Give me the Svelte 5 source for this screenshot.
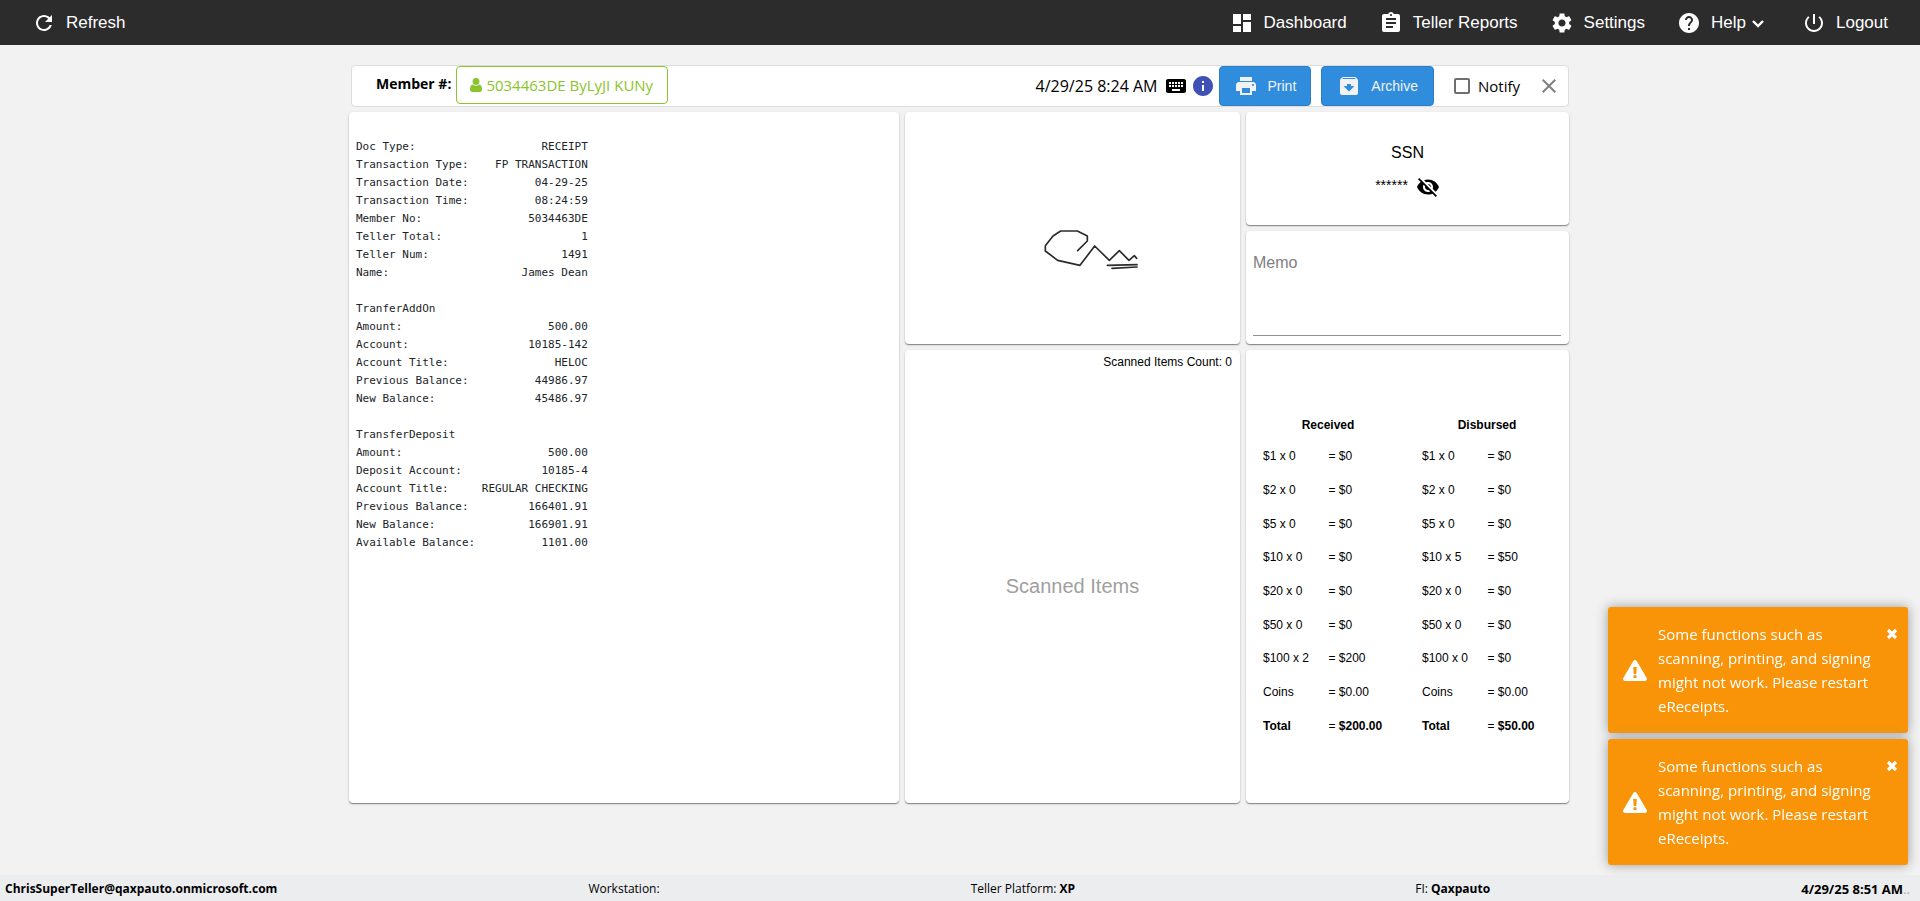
<script>
  const icons = {
    refresh: 'M17.65 6.35C16.2 4.9 14.21 4 12 4c-4.42 0-7.99 3.58-7.99 8s3.57 8 7.99 8c3.73 0 6.84-2.55 7.73-6h-2.08c-.82 2.33-3.04 4-5.65 4-3.31 0-6-2.69-6-6s2.69-6 6-6c1.66 0 3.14.69 4.22 1.78L13 11h7V4l-2.35 2.35z',
    dashboard: 'M3 13h8V3H3v10zm0 8h8v-6H3v6zm10 0h8V11h-8v10zm0-18v6h8V3h-8z',
    assignment: 'M19 3h-4.18C14.4 1.84 13.3 1 12 1c-1.3 0-2.4.84-2.82 2H5c-1.1 0-2 .9-2 2v14c0 1.1.9 2 2 2h14c1.1 0 2-.9 2-2V5c0-1.1-.9-2-2-2zm-7 0c.55 0 1 .45 1 1s-.45 1-1 1-1-.45-1-1 .45-1 1-1zm2 14H7v-2h7v2zm3-4H7v-2h10v2zm0-4H7V7h10v2z',
    settings: 'M19.14 12.94c.04-.3.06-.61.06-.94 0-.32-.02-.64-.07-.94l2.03-1.58c.18-.14.23-.41.12-.61l-1.92-3.32c-.12-.22-.37-.29-.59-.22l-2.39.96c-.5-.38-1.03-.7-1.62-.94l-.36-2.54c-.04-.24-.24-.41-.48-.41h-3.84c-.24 0-.43.17-.47.41l-.36 2.54c-.59.24-1.13.57-1.62.94l-2.39-.96c-.22-.08-.47 0-.59.22L2.74 8.87c-.12.21-.08.47.12.61l2.03 1.58c-.05.3-.09.63-.09.94s.02.64.07.94l-2.03 1.58c-.18.14-.23.41-.12.61l1.92 3.32c.12.22.37.29.59.22l2.39-.96c.5.38 1.03.7 1.62.94l.36 2.54c.05.24.24.41.48.41h3.84c.24 0 .44-.17.47-.41l.36-2.54c.59-.24 1.13-.56 1.62-.94l2.39.96c.22.08.47 0 .59-.22l1.92-3.32c.12-.22.07-.47-.12-.61l-2.01-1.58zM12 15.6c-1.98 0-3.6-1.62-3.6-3.6s1.62-3.6 3.6-3.6 3.6 1.62 3.6 3.6-1.62 3.6-3.6 3.6z',
    help: 'M12 2C6.48 2 2 6.48 2 12s4.48 10 10 10 10-4.48 10-10S17.52 2 12 2zm1 17h-2v-2h2v2zm2.07-7.75l-.9.92C13.45 12.9 13 13.5 13 15h-2v-.5c0-1.1.45-2.1 1.17-2.83l1.24-1.26c.37-.36.59-.86.59-1.41 0-1.1-.9-2-2-2s-2 .9-2 2H8c0-2.21 1.79-4 4-4s4 1.79 4 4c0 .88-.36 1.68-.93 2.25z',
    power: 'M13 3h-2v10h2V3zm4.83 2.17l-1.42 1.42C17.99 7.86 19 9.81 19 12c0 3.87-3.13 7-7 7s-7-3.13-7-7c0-2.19 1.01-4.14 2.58-5.42L6.17 5.17C4.23 6.82 3 9.26 3 12c0 4.97 4.03 9 9 9s9-4.03 9-9c0-2.74-1.23-5.18-3.17-6.83z',
    keyboard: 'M20 5H4c-1.1 0-1.99.9-1.99 2L2 17c0 1.1.9 2 2 2h16c1.1 0 2-.9 2-2V7c0-1.1-.9-2-2-2zm-9 3h2v2h-2V8zm0 3h2v2h-2v-2zM8 8h2v2H8V8zm0 3h2v2H8v-2zm-1 2H5v-2h2v2zm0-3H5V8h2v2zm9 7H8v-2h8v2zm0-4h-2v-2h2v2zm0-3h-2V8h2v2zm3 3h-2v-2h2v2zm0-3h-2V8h2v2z',
    info: 'M12 2C6.48 2 2 6.48 2 12s4.48 10 10 10 10-4.48 10-10S17.52 2 12 2zm1 15h-2v-6h2v6zm0-8h-2V7h2v2z',
    print: 'M19 8H5c-1.66 0-3 1.34-3 3v6h4v4h12v-4h4v-6c0-1.66-1.34-3-3-3zm-3 11H8v-5h8v5zm3-7c-.55 0-1-.45-1-1s.45-1 1-1 1 .45 1 1-.45 1-1 1zm-1-9H6v4h12V3z',
    archive: 'M20.54 5.23l-1.39-1.68C18.88 3.21 18.47 3 18 3H6c-.47 0-.88.21-1.16.55L3.46 5.23C3.17 5.57 3 6.02 3 6.5V19c0 1.1.9 2 2 2h14c1.1 0 2-.9 2-2V6.5c0-.48-.17-.93-.46-1.27zM12 17.5L6.5 12H10v-2h4v2h3.5L12 17.5zM5.12 5l.81-1h12l.94 1H5.12z',
    close: 'M19 6.41L17.59 5 12 10.59 6.41 5 5 6.41 10.59 12 5 17.59 6.41 19 12 13.41 17.59 19 19 17.59 13.41 12z',
    hidden: 'M12 7c2.76 0 5 2.24 5 5 0 .65-.13 1.26-.36 1.83l2.92 2.92c1.51-1.26 2.7-2.89 3.43-4.75-1.73-4.39-6-7.5-11-7.5-1.4 0-2.74.25-3.98.7l2.16 2.16C10.74 7.13 11.35 7 12 7zM2 4.27l2.28 2.28.46.46C3.08 8.3 1.78 10.02 1 12c1.73 4.39 6 7.5 11 7.5 1.55 0 3.03-.3 4.38-.84l.42.42L19.73 22 21 20.73 3.27 3 2 4.27zM7.53 9.8l1.55 1.55c-.05.21-.08.43-.08.65 0 1.66 1.34 3 3 3 .22 0 .44-.03.65-.08l1.55 1.55c-.67.33-1.41.53-2.2.53-2.76 0-5-2.24-5-5 0-.79.2-1.53.53-2.2zm4.31-.78l3.15 3.15.02-.16c0-1.66-1.34-3-3-3l-.17.01z'
  };

  const nav = [
    { icon: 'dashboard', label: 'Dashboard' },
    { icon: 'assignment', label: 'Teller Reports' },
    { icon: 'settings', label: 'Settings' },
    { icon: 'help', label: 'Help', menu: true },
    { icon: 'power', label: 'Logout' }
  ];

  const lines = [
    ['Doc Type:', 'RECEIPT'],
    ['Transaction Type:', 'FP TRANSACTION'],
    ['Transaction Date:', '04-29-25'],
    ['Transaction Time:', '08:24:59'],
    ['Member No:', '5034463DE'],
    ['Teller Total:', '1'],
    ['Teller Num:', '1491'],
    ['Name:', 'James Dean'],
    [],
    ['TranferAddOn'],
    ['Amount:', '500.00'],
    ['Account:', '10185-142'],
    ['Account Title:', 'HELOC'],
    ['Previous Balance:', '44986.97'],
    ['New Balance:', '45486.97'],
    [],
    ['TransferDeposit'],
    ['Amount:', '500.00'],
    ['Deposit Account:', '10185-4'],
    ['Account Title:', 'REGULAR CHECKING'],
    ['Previous Balance:', '166401.91'],
    ['New Balance:', '166901.91'],
    ['Available Balance:', '1101.00']
  ];
  const RECEIPT_WIDTH = 35;
  const receipt = lines
    .map(([label = '', value = '']) => (value ? label + value.padStart(RECEIPT_WIDTH - label.length) : label))
    .join('\n');

  const denominations = [1, 2, 5, 10, 20, 50, 100];
  const received = { 100: 2 };
  const disbursed = { 10: 5 };

  let notify = $state(false);
  let memo = $state('');
  let toasts = $state([1, 2]);
</script>

{#snippet icon(name)}
  <svg width="24" height="24" viewBox="0 0 24 24" fill="currentColor" aria-hidden="true"><path d={icons[name]} /></svg>
{/snippet}

<div class="page">
  <header>
    <button class="nav-item">{@render icon('refresh')}<span>Refresh</span></button>
    <nav>
      {#each nav as item}
        <a class="nav-item" href="#{item.icon}">
          {@render icon(item.icon)}
          <span>{item.label}</span>
          {#if item.menu}
            <svg class="caret" width="14" height="14" viewBox="0 0 14 14" aria-hidden="true"><path d="M2 4l5 5 5-5" fill="none" stroke="currentColor" stroke-width="2.4" /></svg>
          {/if}
        </a>
      {/each}
    </nav>
  </header>

  <main>
    <div class="bar">
      <strong class="member-label">Member #:</strong>
      <button class="member">
        <svg width="12" height="14" viewBox="0 0 12 14" fill="currentColor" aria-hidden="true"><circle cx="6" cy="3.5" r="3.4" /><path d="M3 6.6C1 7 0 8.6 0 11.2 0 13 .9 14 2.3 14h7.4C11.1 14 12 13 12 11.2 12 8.6 11 7 9 6.600 7.4 8.2 4.6 8.2 3 6.6z" /></svg>
        <span>5034463DE ByLyJI KUNy</span>
      </button>
      <div class="actions">
        <span class="date">4/29/25 8:24 AM</span>
        <span class="keyboard">{@render icon('keyboard')}</span>
        <span class="info">{@render icon('info')}</span>
        <button class="primary">{@render icon('print')}<span>Print</span></button>
        <button class="primary">{@render icon('archive')}<span>Archive</span></button>
        <label class="notify"><input type="checkbox" bind:checked={notify} /><span>Notify</span></label>
        <button class="close" aria-label="Close">{@render icon('close')}</button>
      </div>
    </div>

    <div class="cards">
      <section class="card receipt"><pre>{receipt}</pre></section>

      <section class="card signature">
        <svg viewBox="45 -264 1005 696" fill="none" stroke="#2b2b2b" stroke-width="5" stroke-linejoin="round" stroke-linecap="round" aria-hidden="true">
          <path d="M563 152L592 123V108L562 93H512L489 108L466 137V153L503 181L570 196L614 138L658 181L688 152L717 181L733 167L740 175" />
          <path d="M652 196L741 194M741 201L666 205" />
        </svg>
      </section>

      <section class="card scanned">
        <p class="count">Scanned Items Count: 0</p>
        <p class="empty">Scanned Items</p>
      </section>

      <section class="card ssn">
        <span>SSN</span>
        <div class="masked"><span>******</span><button aria-label="Show SSN">{@render icon('hidden')}</button></div>
      </section>

      <section class="card memo">
        <textarea aria-label="Memo" placeholder="Memo" bind:value={memo}></textarea>
      </section>

      <section class="card cash">
        <table>
          <thead>
            <tr><th colspan="2">Received</th><th colspan="2">Disbursed</th></tr>
          </thead>
          <tbody>
            {#each denominations as d}
              <tr>
                {#each [received, disbursed] as side}
                  <td class="label">${d} x {side[d] ?? 0}</td>
                  <td>= ${d * (side[d] ?? 0)}</td>
                {/each}
              </tr>
            {/each}
            <tr>
              <td class="label">Coins</td><td>= $0.00</td>
              <td class="label">Coins</td><td>= $0.00</td>
            </tr>
            <tr>
              <td class="label"><b>Total</b></td><td>= <b>$200.00</b></td>
              <td class="label"><b>Total</b></td><td>= <b>$50.00</b></td>
            </tr>
          </tbody>
        </table>
      </section>
    </div>
  </main>

  <footer>
    <b>ChrisSuperTeller@qaxpauto.onmicrosoft.com</b>
    <span>Workstation:</span>
    <span>Teller Platform: <b>XP</b></span>
    <span class="fi">FI: <b>Qaxpauto</b></span>
    <span class="clock"><b>4/29/25 8:51 AM</b><span class="dots">..</span></span>
  </footer>

  <div class="toasts">
    {#each toasts as id (id)}
      <div class="toast" role="alert">
        <svg width="24" height="21" viewBox="0 0 24 21" aria-hidden="true">
          <path d="M10.3 1C11 -.3 13 -.3 13.7 1L23.7 18C24.5 19.4 23.6 21 22 21H2C.4 21 -.5 19.4 .3 18z" fill="#fff" />
          <path d="M10.2 7h3.600l-.5 7h-2.600zM10.5 15.2h3v2.800h-3z" fill="#f99408" />
        </svg>
        <p>Some functions such as scanning, printing, and signing might not work. Please restart eReceipts.</p>
        <button aria-label="Dismiss" onclick={() => (toasts = toasts.filter((t) => t !== id))}>
          <svg width="12" height="12" viewBox="0 0 12 12" aria-hidden="true"><path d="M2 2l8 8M10 2l-8 8" stroke="#fff" stroke-width="3.2" /></svg>
        </button>
      </div>
    {/each}
  </div>
</div>

<style>
  :global(body) { background: #f2f2f2; }
  * { box-sizing: border-box; }
  p, pre { margin: 0; }
  button { font: inherit; color: inherit; background: none; border: 0; padding: 0; cursor: pointer; }
  svg { display: block; flex: none; }

  .page {
    min-height: 100vh;
    display: flex;
    flex-direction: column;
    font-family: "Open Sans", "Noto Sans", sans-serif;
    color: #000;
  }

  header {
    display: flex;
    justify-content: space-between;
    height: 45px;
    padding: 0 32px;
    background: #2c2c2c;
    color: #fff;
    font: 17px/24px "Liberation Sans", Arial, sans-serif;
  }
  nav { display: flex; gap: 32px; }
  .nav-item { display: flex; align-items: center; gap: 10px; color: #fff; text-decoration: none; }
  .caret { margin: 2px 5px 0 -5px; }

  main { flex: 1; width: 100%; max-width: 1222px; margin: 0 auto; padding: 20px 2px 0 0; }

  .bar {
    display: flex;
    align-items: flex-start;
    height: 42px;
    margin: 0 0 5px 2px;
    padding-left: 24px;
    background: #fff;
    border: 1px solid #ddd;
    border-radius: 4px;
    font-size: 15px;
  }
  .member-label { margin-right: 5px; font-size: 14px; line-height: 36px; }
  .member {
    display: flex;
    align-items: center;
    gap: 4px;
    height: 38px;
    padding: 0 14px 0 13px;
    border: 1px solid #8bc42c;
    border-radius: 4px;
    color: #8bc42c;
  }
  .actions { display: flex; align-items: center; height: 40px; margin-left: auto; }
  .date { margin-right: 6px; font-size: 16px; }
  .keyboard { margin-right: 3px; }
  .info { margin-right: 4px; color: #3f51b5; }
  .primary {
    display: flex;
    align-items: center;
    gap: 10px;
    height: 40px;
    margin-right: 10px;
    padding: 0 14px;
    border: 1px solid #2a7fc8;
    border-radius: 4px;
    background: #308ddd;
    color: #f2f2f2;
    font: 14px "Liberation Sans", Arial, sans-serif;
  }
  .primary + .primary { padding: 0 15px; }
  .notify { display: flex; align-items: center; gap: 8px; margin: 0 17px 0 10px; }
  .notify input { appearance: none; width: 16px; height: 16px; margin: 0; border: 2px solid #6f6f6f; border-radius: 2px; background: #fff; }
  .notify input:checked { background: #308ddd; }
  .close { margin-right: 7px; color: #808080; }

  .cards {
    display: grid;
    grid-template-columns: 550fr 335fr 323fr;
    grid-template-rows: minmax(113px, auto) minmax(113px, auto) minmax(453px, auto);
    gap: 6px;
    font-family: "Liberation Sans", Arial, sans-serif;
  }
  .card {
    min-width: 0;
    background: #fff;
    border-radius: 4px;
    box-shadow: 0 1px 1px rgba(0, 0, 0, 0.4), 0 1px 3px rgba(0, 0, 0, 0.12);
  }
  .receipt { grid-area: 1 / 1 / 4 / 2; padding: 26px 7px; }
  pre { color: #212529; font: 11px/18px "DejaVu Sans Mono", monospace; }

  .signature { grid-area: 1 / 2 / 3 / 3; }
  .signature svg { width: 100%; height: 100%; }

  .scanned { grid-area: 3 / 2; display: flex; flex-direction: column; }
  .count { padding: 4px 8px 0; text-align: right; font-size: 12px; line-height: 16px; }
  .empty { flex: 1; display: flex; align-items: center; justify-content: center; color: #a0a0a0; font-size: 20px; }

  .ssn { grid-area: 1 / 3; display: flex; flex-direction: column; align-items: center; padding-top: 31px; gap: 12px; font-size: 16px; line-height: 20px; }
  .masked { display: flex; align-items: flex-start; gap: 8px; font-size: 14px; }

  .memo { grid-area: 2 / 3; padding: 20px 8px 8px 7px; }
  textarea {
    display: block;
    width: 100%;
    height: 85px;
    padding: 0;
    border: 0;
    border-bottom: 1px solid #8f8f8f;
    outline: 0;
    resize: none;
    font: 16px/24px "Liberation Sans", Arial, sans-serif;
  }
  textarea::placeholder { color: #808080; }

  .cash { grid-area: 3 / 3; display: flex; align-items: center; padding: 0 3px 0 2px; }
  table { width: 100%; height: 332px; border-collapse: collapse; table-layout: fixed; font-size: 12px; }
  th, td { padding: 0 0 0 1px; }
  th { height: 29px; }
  .label { padding-left: 15px; }

  footer {
    display: flex;
    justify-content: space-between;
    height: 26px;
    padding: 0 10px 0 5px;
    background: #ebedef;
    font-size: 12px;
    line-height: 28px;
  }
  .fi { margin-left: 29px; }
  .clock { font-size: 13px; }
  .dots { color: #aaa; }

  .toasts { position: fixed; right: 12px; bottom: 36px; display: flex; flex-direction: column; gap: 6px; width: 300px; }
  .toast {
    display: flex;
    align-items: center;
    gap: 11px;
    padding: 15px 10px 15px 15px;
    border-radius: 3px;
    background: #f99408;
    box-shadow: 0 0 12px #999;
    color: #fff;
    font-size: 15px;
    line-height: 24px;
  }
  .toast p { flex: 1; }
  .toast button { align-self: flex-start; padding-top: 6px; margin-left: -9px; }
</style>
